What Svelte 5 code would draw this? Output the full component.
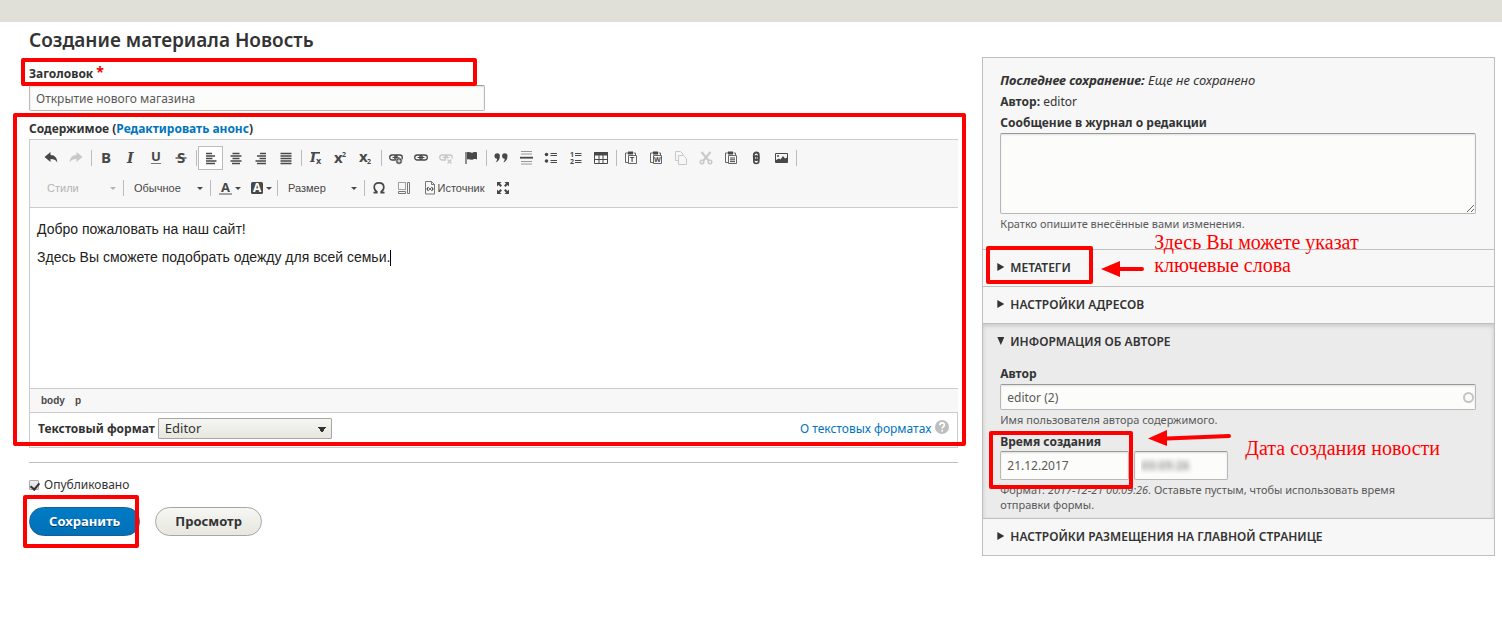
<script>
    let title = "Открытие нового магазина";
    let published = true;
    let log = "";
    let author = "editor (2)";
    let date = "21.12.2017";
    let time = "00:09:26";

    const page = '<path d="M6 3H2.500v9.500H5M10.500 3h2v2" fill="none" stroke="#666"/><path d="M5 1.500h5v3H5z" fill="#484848"/><path d="M5.500 5.500h8v8h-8z" fill="#f8f8f8" stroke="#666"/>';
    const chain = '<g fill="none" stroke="currentColor" stroke-width="1.300"><rect x="1.700" y="5" width="7.500" height="5" rx="2.500"/><rect x="6.800" y="5" width="7.500" height="5" rx="2.500"/></g><path d="M4.500 7.500h7" stroke="currentColor"/>';

    const groups = [
        [
            { name: "Отменить", icon: '<path d="M1.500 7 7.500 2v3c4.500.2 6.800 3 6.700 7.500C12.800 9.700 11 9 7.500 9v3z" fill="currentColor"/>' },
            { name: "Повторить", off: true, icon: '<path d="M14.500 7 8.500 2v3C4 5.200 1.700 8 1.800 12.500 3.200 9.700 5 9 8.500 9v3z" fill="currentColor"/>' }
        ],
        [
            { name: "Полужирный", icon: '<text x="3" y="13" font-size="15" font-weight="700">B</text>' },
            { name: "Курсив", icon: '<text x="4" y="13" font-size="14" font-weight="700" font-style="italic" font-family="DejaVu Serif">I</text>' },
            { name: "Подчеркнутый", icon: '<text x="3" y="11" font-size="13" font-weight="700">U</text><path d="M3 13.500h10" stroke="#777"/>' },
            { name: "Зачеркнутый", icon: '<text x="4" y="13" font-size="15" font-weight="700">S</text><path d="M2.500 8h11" stroke="currentColor" stroke-width="1.300"/>' }
        ],
        [
            { name: "По левому краю", on: true, icon: '<path d="M3 3.500h6M3 6h9M3 8.500h6.500M3 11h10.500M3 13.500h9" stroke="currentColor" stroke-width="1.400"/>' },
            { name: "По центру", icon: '<path d="M4.500 3.500h7M2.500 6h11M4.500 8.500h7M2.500 11h11M4 13.500h8" stroke="currentColor" stroke-width="1.400"/>' },
            { name: "По правому краю", icon: '<path d="M7 3.500h6M4 6h9M6.500 8.500H13M2.500 11H13M4 13.500h9" stroke="currentColor" stroke-width="1.400"/>' },
            { name: "По ширине", icon: '<path d="M2.500 3.500h11M2.500 6h11M2.500 8.500h11M2.500 11h11M2.500 13.500h11" stroke="currentColor" stroke-width="1.400"/>' }
        ],
        [
            { name: "Убрать форматирование", icon: '<text x="2" y="12" font-size="13" font-weight="700" font-style="italic" font-family="DejaVu Serif">I</text><path d="M3 2.800h9" stroke="currentColor" stroke-width="1.600"/><text x="8" y="14" font-size="9" font-weight="700">x</text>' },
            { name: "Надстрочный индекс", icon: '<text x="1" y="13" font-size="15" font-weight="700">x</text><text x="9" y="7" font-size="7" font-weight="700">2</text>' },
            { name: "Подстрочный индекс", icon: '<text x="1" y="12" font-size="15" font-weight="700">x</text><text x="9" y="14" font-size="7" font-weight="700">2</text>' }
        ],
        [
            { name: "Вставить ссылку", icon: chain + '<circle cx="11" cy="11" r="3.200" fill="#484848" stroke="#f8f8f8" stroke-width=".5"/><path d="M11 9.300v3.400M9.300 11h3.400" stroke="#fff"/>' },
            { name: "Ссылка", icon: chain },
            { name: "Убрать ссылку", off: true, icon: chain + '<path d="M8 8.500h7v6H8z" fill="#f8f8f8"/><path d="m9.500 9.500 4 4m0-4-4 4" stroke="currentColor" stroke-width="1.400"/>' },
            { name: "Якорь", icon: '<path d="M3 2v12" stroke="currentColor" stroke-width="1.200"/><path d="M4 2.500c2-1.300 4 1 6 0 1.300-.6 2.500-.6 4 0v7c-1.500-.6-3-.5-4 0-2 1-4-1-6 0z" fill="currentColor"/>' }
        ],
        [
            { name: "Цитата", icon: '<path d="M1.500 6a2.700 2.700 0 0 1 5.400 0c0 3-1.300 5.700-4.400 6.500 1-1.200 1.600-2.300 1.600-3.800A2.700 2.700 0 0 1 1.500 6zm7.600 0a2.700 2.700 0 0 1 5.400 0c0 3-1.300 5.700-4.400 6.500 1-1.200 1.600-2.300 1.600-3.800A2.700 2.700 0 0 1 9.100 6z" fill="currentColor"/>' },
            { name: "Горизонтальная линия", icon: '<path d="M3 1.500h11M3 4h11M3 11.500h11M3 14h11" stroke="#999"/><path d="M2 7.700h13" stroke="currentColor" stroke-width="1.800"/>' },
            { name: "Маркированный список", icon: '<circle cx="3.500" cy="4.500" r="1.800" fill="currentColor"/><circle cx="3.500" cy="11" r="1.800" fill="currentColor"/><path d="M7.500 3.500H14M7.500 5.500H14M7.500 10.500H14M7.500 12.500H14" stroke="currentColor"/>' },
            { name: "Нумерованный список", icon: '<text x="2" y="7" font-size="7" font-weight="700">1</text><text x="2" y="14" font-size="7" font-weight="700">2</text><path d="M7 3.500h6.500M7 5.500h6.500M7 10.500h6.500M7 12.500h6.500" stroke="currentColor"/>' },
            { name: "Таблица", icon: '<path d="M1.500 2.500h13v11h-13zM1.500 9.500h13M6 4v9.500M10 4v9.500" fill="none" stroke="currentColor"/><path d="M1 2h14v3.500H1z" fill="currentColor"/>' }
        ],
        [
            { name: "Вставить только текст", icon: page + '<text x="7" y="12" font-size="7" font-weight="700">T</text>' },
            { name: "Вставить из Word", icon: page + '<text x="6" y="12" font-size="7" font-weight="700">W</text>' },
            { name: "Копировать", off: true, icon: '<path d="M5.500 10.500h-3v-9h5l2.500 2.500v1M5.500 5.500h5l3 3v6h-8z" fill="none" stroke="currentColor"/>' },
            { name: "Вырезать", off: true, icon: '<path d="m3.500 2 7.500 9M12.500 2 5 11" stroke="currentColor" stroke-width="2"/><g fill="none" stroke="currentColor" stroke-width="1.400"><circle cx="4" cy="12" r="1.800"/><circle cx="12" cy="12" r="1.800"/></g>' },
            { name: "Вставить", icon: page + '<path d="M7 8h5M7 9.800h5M7 11.600h5" stroke="currentColor"/>' },
            { name: "Файл", icon: '<rect x="5.800" y="2.500" width="5" height="7.500" rx="2.500" fill="none" stroke="currentColor" stroke-width="1.800"/><rect x="5.800" y="6" width="5" height="7.500" rx="2.500" fill="none" stroke="currentColor" stroke-width="1.600"/><path d="M8.300 5v6" stroke="currentColor"/>' },
            { name: "Изображение", icon: '<path d="M2.500 3.500h12v9h-12z" fill="none" stroke="currentColor"/><path d="M3 12.500V10l3-1.500 1.500 1L10 6l2 2.500 2-1v5z" fill="currentColor"/><circle cx="5" cy="6" r="1" fill="currentColor"/>' }
        ]
    ];

    const tools = [
        { name: "Специальный символ", icon: '<path d="M2.500 12.700h3.300v-1C4 10.600 3.200 9 3.200 7.200 3.200 4.500 5 2.800 8 2.800s4.800 1.700 4.800 4.400c0 1.800-.8 3.400-2.600 4.500v1h3.300" fill="none" stroke="currentColor" stroke-width="1.700"/>' },
        { name: "Показать блоки", icon: '<path d="M2.500 2.500h7v7h-7z" fill="none" stroke="currentColor" stroke-dasharray="1 1"/><path d="M2.500 11.500h7v2h-7zM11.500 2.500h2v11h-2z" fill="none" stroke="#777"/>' },
        { name: "Источник", text: "Источник", icon: '<path d="M3.500 1.500h6l3 3v9.500h-9zM9.500 1.500v3h3" fill="none" stroke="#777"/><path d="M6.500 7 5 9l1.500 2M9.500 7 11 9l-1.500 2" fill="none" stroke="currentColor" stroke-width="1.200"/><circle cx="8" cy="9" r="1" fill="currentColor"/>' },
        { name: "Развернуть", icon: '<path d="M2 2h4.500L5 3.500 7 5.500 5.500 7l-2-2L2 6.500zM14 2v4.500L12.500 5l-2 2L9 5.500l2-2L9.500 2zM2 14V9.500L3.500 11l2-2L7 10.500l-2 2L6.500 14zM14 14H9.500l1.500-1.500-2-2L10.500 9l2 2L14 9.500z" fill="currentColor"/>' }
    ];

    const colors = [
        { name: "Цвет текста", icon: '<text x="3" y="12" font-size="13" font-weight="700">A</text><path d="M1 14h13" stroke="#888" stroke-width="1.500"/>' },
        { name: "Цвет фона", icon: '<rect x="2" y="2" width="12" height="12" rx="1.500" fill="currentColor"/><text x="4" y="12" font-size="12" font-weight="700" style="fill:#fff">A</text>' }
    ];
</script>

{#snippet tool(item)}
    <button type="button" class="tool" class:on={item.on} class:off={item.off} title={item.name} aria-label={item.name}>
        <svg viewBox="0 0 16 16">{@html item.icon}</svg>
        {#if item.text}<span>{item.text}</span>{/if}
    </button>
{/snippet}

{#snippet combo(name, off)}
    <button type="button" class="combo" class:off>
        <span>{name}</span><i class="caret"></i>
    </button>
{/snippet}

<header class="topbar"></header>

<div class="page">
    <form class="main">
        <h1>Создание материала Новость</h1>

        <div class="title-label">
            <label for="title">Заголовок</label><span class="required">*</span>
            <div class="mark title-mark"></div>
        </div>
        <input id="title" class="field title" type="text" bind:value={title} />

        <section class="body-field">
            <div class="body-label">Содержимое (<a href="#summary">Редактировать анонс</a>)</div>
            <div class="editor">
                <div class="toolbar">
                    <div class="row">
                        {#each groups as group}
                            <div class="group">
                                {#each group as item}{@render tool(item)}{/each}
                            </div>
                        {/each}
                    </div>
                    <div class="row">
                        <div class="group">{@render combo("Стили", true)}</div>
                        <div class="group">{@render combo("Обычное", false)}</div>
                        <div class="group">
                            {#each colors as item}
                                <button type="button" class="tool color" aria-label={item.name}>
                                    <svg viewBox="0 0 16 16">{@html item.icon}</svg><i class="caret"></i>
                                </button>
                            {/each}
                        </div>
                        <div class="group">{@render combo("Размер", false)}</div>
                        <div class="group last">
                            {#each tools as item}{@render tool(item)}{/each}
                        </div>
                    </div>
                </div>
                <div class="content" contenteditable="true" role="textbox" tabindex="0" aria-label="Содержимое">
                    <p>Добро пожаловать на наш сайт!</p>
                    <p>Здесь Вы сможете подобрать одежду для всей семьи.<span class="cursor"></span></p>
                </div>
                <div class="path"><span>body</span><span>p</span></div>
            </div>
            <div class="format">
                <label for="format">Текстовый формат</label>
                <select id="format">
                    <option>Editor</option>
                </select>
                <a href="#formats">О текстовых форматах
                    <svg viewBox="0 0 14 14"><circle cx="7" cy="7" r="7" fill="#bebebe" /><path d="M4.800 5.300c0-3.200 4.600-3 4.600-.3C9.400 6.700 7.200 6.700 7.200 8.500M7.200 9.800v1.700" fill="none" stroke="#fff" stroke-width="1.700" /></svg>
                </a>
            </div>
            <div class="mark body-mark"></div>
        </section>

        <div class="actions">
            <label class="published"><input type="checkbox" bind:checked={published} /><span>Опубликовано</span></label>
            <div class="buttons">
                <div class="save">
                    <button type="button" class="button primary">Сохранить</button>
                    <div class="mark save-mark"></div>
                </div>
                <button type="button" class="button">Просмотр</button>
            </div>
        </div>
    </form>

    <aside class="sidebar">
        <section class="meta">
            <p><em><b>Последнее сохранение:</b> Еще не сохранено</em></p>
            <p><b>Автор:</b> editor</p>
            <label for="log">Сообщение в журнал о редакции</label>
            <textarea id="log" class="field" bind:value={log}></textarea>
            <p class="hint">Кратко опишите внесённые вами изменения.</p>
        </section>

        <details>
            <summary>Метатеги</summary>
        </details>
        <div class="note meta-note">
            <div class="mark meta-mark"></div>
            <svg class="arrow" viewBox="0 0 44 18"><path d="M19 9h22" stroke="red" stroke-width="4" stroke-linecap="round" /><path d="M0 9 19 1v16z" fill="red" /></svg>
            <p>Здесь Вы можете указат<br />ключевые слова</p>
        </div>
        <details>
            <summary>Настройки адресов</summary>
        </details>
        <details class="opened" open>
            <summary>Информация об авторе</summary>
            <div class="inner">
                <label for="author">Автор</label>
                <div class="lookup">
                    <input id="author" class="field" type="text" bind:value={author} />
                    <i class="throbber"></i>
                </div>
                <p class="hint">Имя пользователя автора содержимого.</p>
                <div class="created">
                    <label for="date">Время создания</label>
                    <div class="times">
                        <input id="date" class="field" type="text" bind:value={date} />
                        <input class="field hidden-time" type="text" aria-label="Время" bind:value={time} />
                    </div>
                    <div class="mark date-mark"></div>
                    <div class="note date-note">
                        <svg class="arrow long" viewBox="0 0 84 18"><path d="M19 9.500 81 7" stroke="red" stroke-width="4" stroke-linecap="round" /><path d="M0 9.500 19 1v16z" fill="red" /></svg>
                        <p>Дата создания новости</p>
                    </div>
                </div>
                <p class="hint">Формат: <em>2017-12-21 00:09:26</em>. Оставьте пустым, чтобы использовать время отправки&nbsp;формы.</p>
            </div>
        </details>
        <details>
            <summary>Настройки размещения на главной странице</summary>
        </details>
    </aside>
</div>

<style>
    :global(body) {
        background: #fff;
        color: #333;
        font: 13px/21px "Noto Sans", "Open Sans", sans-serif;
    }

    :global(*) {
        box-sizing: border-box;
    }

    .topbar {
        height: 22px;
        background: #e0e0d8;
    }

    .page {
        display: grid;
        grid-template-columns: 29fr 16fr;
        column-gap: 24px;
        align-items: start;
        padding: 0 7px 0 29px;
    }

    p,
    h1 {
        margin: 0;
    }

    a {
        color: #0074bd;
        text-decoration: none;
    }

    label,
    .body-label {
        font-weight: 700;
        font-size: 12px;
    }

    h1 {
        padding-top: 4px;
        font-size: 19px;
        line-height: 28px;
        font-weight: 600;
    }

    /* red frames and notes that lie over the form */
    .mark {
        position: absolute;
        border: 4px solid #f00;
        border-radius: 2px;
        pointer-events: none;
        z-index: 2;
    }

    .field {
        display: block;
        width: 100%;
        height: 26px;
        margin: 0;
        padding: 0 6px;
        border: 1px solid #b8b8b8;
        border-top-color: #999;
        border-radius: 2px;
        background: #fcfcfa;
        box-shadow: inset 0 1px 2px rgba(0, 0, 0, 0.12);
        color: #595959;
        font: 12px "Noto Sans", sans-serif;
        outline: none;
    }

    .title-label {
        position: relative;
        display: flex;
        gap: 3px;
        padding-top: 9px;
        height: 31px;
    }

    .required {
        color: #e00;
        font-size: 14px;
        font-weight: 700;
        line-height: 18px;
    }

    .title-mark {
        top: 4px;
        left: -8px;
        width: 456px;
        height: 28px;
    }

    .title {
        width: 456px;
        max-width: 100%;
    }

    .body-field {
        position: relative;
        padding-top: 8px;
    }

    .body-label {
        line-height: 20px;
    }

    .body-mark {
        inset: 2px -8px 2px -16px;
    }

    .editor {
        border: 1px solid #ccc;
        border-right: 0;
    }

    .toolbar {
        display: flex;
        flex-direction: column;
        gap: 6px;
        padding: 6px 8px 7px;
        background: #f7f7f7;
        border-bottom: 1px solid #ccc;
    }

    .row,
    .group {
        display: flex;
        align-items: center;
    }

    .group::after {
        content: "";
        width: 1px;
        height: 16px;
        margin: 0 1px 0 3px;
        background: #bcbcbc;
    }

    .group.last::after {
        display: none;
    }

    button {
        cursor: pointer;
    }

    .tool,
    .combo {
        display: flex;
        align-items: center;
        justify-content: center;
        width: 25px;
        height: 24px;
        padding: 0;
        border: 0;
        background: none;
        color: #484848;
        font: 11px "Liberation Sans", Arial, sans-serif;
    }

    .tool:has(span) {
        width: 74px;
    }

    .tool svg {
        width: 16px;
        height: 16px;
        flex: none;
        overflow: visible;
        fill: #484848;
        font-family: "Open Sans", sans-serif;
    }

    .tool.on {
        border: 1px solid #bcbcbc;
        background: #fff;
    }

    .tool.off {
        color: #c8c8c8;
    }

    .tool.color {
        width: 31px;
        gap: 1px;
        padding-left: 3px;
    }

    .combo {
        width: 82px;
        justify-content: space-between;
        padding: 0 4px 0 9px;
    }

    .combo.off {
        color: #b4b4b4;
    }

    .caret {
        border: 3px solid transparent;
        border-top-color: currentColor;
        border-bottom: 0;
    }

    .content {
        height: 180px;
        padding: 12px 7px;
        outline: none;
        background: #fff;
        color: #222;
        font: 14px/18px "Liberation Sans", Arial, sans-serif;
    }

    .content p + p {
        margin-top: 10px;
    }

    .cursor {
        display: inline-block;
        width: 1px;
        height: 16px;
        background: #000;
        vertical-align: middle;
    }

    .path {
        display: flex;
        gap: 10px;
        padding: 0 11px;
        border-top: 1px solid #ccc;
        background: #f7f7f7;
        color: #484848;
        font: 700 10px/23px "Liberation Sans", Arial, sans-serif;
    }

    .format {
        display: flex;
        align-items: center;
        gap: 3px;
        height: 35px;
        padding: 0 8px 4px;
        border: 1px solid #ccc;
        border-top: 0;
    }

    .format a {
        display: flex;
        gap: 4px;
        margin-left: auto;
        font-size: 12px;
    }

    .format a svg {
        width: 14px;
        height: 14px;
        margin-top: 2px;
    }

    select {
        appearance: none;
        width: 174px;
        height: 21px;
        padding: 0 6px;
        border: 1px solid #a6a6a6;
        border-radius: 1px;
        background:
            linear-gradient(to bottom left, #333 50%, transparent 50%) right 9px top 8px / 4px 6px no-repeat,
            linear-gradient(to bottom right, #333 50%, transparent 50%) right 5px top 8px / 4px 6px no-repeat,
            linear-gradient(#f6f6f3, #e7e7df);
        color: #333;
        font: 13px/17px "Noto Sans", sans-serif;
    }

    .actions {
        margin-top: 14px;
        padding-top: 11px;
        border-top: 1px solid #bebebe;
    }

    .published {
        display: flex;
        align-items: center;
        gap: 5px;
        font-weight: 400;
    }

    .published input {
        appearance: none;
        width: 10px;
        height: 10px;
        margin: 0;
        border: 1px solid #aaa;
        border-radius: 1px;
        background: linear-gradient(#eee, #ddd);
    }

    .published input:checked::before {
        content: "";
        display: block;
        width: 4px;
        height: 7px;
        margin: 0 0 0 2px;
        border: solid #333;
        border-width: 0 2px 2px 0;
        transform: rotate(40deg);
    }

    .buttons {
        display: flex;
        gap: 15px;
        padding-top: 12px;
    }

    .save {
        position: relative;
    }

    .save-mark {
        inset: -12px 1px -12px -6px;
    }

    .button {
        display: block;
        height: 29px;
        padding: 0 19px 2px;
        border: 1px solid #a6a6a6;
        border-radius: 15px;
        background: linear-gradient(#f6f6f3, #e7e7df);
        color: #333;
        font: 700 13px "Noto Sans", sans-serif;
    }

    .primary {
        border-color: #1e5c90;
        background: linear-gradient(#007bc6, #0071b8);
        color: #fff;
        text-shadow: 0 1px rgba(0, 0, 0, 0.5);
    }

    .sidebar {
        margin-top: 35px;
        border: 1px solid #bfbfbf;
        background: #f7f7f7;
    }

    .meta {
        padding: 12px 18px 18px 17px;
        font-size: 12px;
    }

    .meta em {
        font-size: 13px;
    }

    .meta label {
        display: block;
    }

    textarea.field {
        height: 81px;
        resize: both;
    }

    p.hint {
        color: #595959;
        font-size: 11px;
        line-height: 15px;
        padding-top: 2px;
    }

    details {
        border-top: 1px solid #bfbfbf;
    }

    summary {
        display: flex;
        align-items: center;
        gap: 6px;
        height: 36px;
        padding: 0 14px 2px;
        font-size: 12px;
        font-weight: 600;
        text-transform: uppercase;
        cursor: pointer;
    }

    summary::before {
        content: "";
        width: 7px;
        height: 8px;
        background: #333;
        clip-path: polygon(0 0, 100% 50%, 0 100%);
    }

    .opened {
        background: #ebebeb;
        box-shadow: inset 0 2px 4px rgba(0, 0, 0, 0.15);
    }

    .opened summary::before {
        clip-path: polygon(0 0, 100% 0, 50% 100%);
    }

    .inner {
        padding: 4px 18px 6px 17px;
    }

    .inner label {
        display: block;
        line-height: 20px;
    }

    .lookup,
    .created {
        position: relative;
    }

    .throbber {
        position: absolute;
        top: 8px;
        right: 2px;
        width: 11px;
        height: 11px;
        border: 2px solid #c4c4c4;
        border-radius: 50%;
    }

    .times {
        display: flex;
        gap: 5px;
    }

    .created {
        padding-top: 6px;
    }

    .created label {
        line-height: 18px;
    }

    .times .field {
        width: 129px;
        height: 29px;
    }

    .times .hidden-time {
        width: 94px;
        color: transparent;
        text-shadow: 0 0 5px #999;
        font-weight: 700;
    }

    .note {
        position: relative;
        height: 0;
        color: #f00;
        font: 20px/23px "Liberation Serif", "Times New Roman", serif;
        z-index: 3;
    }

    .note p,
    .arrow {
        position: absolute;
    }

    .arrow {
        width: 44px;
        height: 18px;
    }

    .meta-mark {
        top: -40px;
        left: 3px;
        width: 107px;
        height: 38px;
    }

    .meta-note .arrow {
        top: -26px;
        left: 118px;
    }

    .meta-note p {
        top: -55px;
        left: 171px;
    }

    .date-mark {
        top: 4px;
        left: -11px;
        width: 144px;
        height: 58px;
    }

    .date-note {
        position: absolute;
        top: 2px;
        left: 148px;
    }

    .arrow.long {
        width: 84px;
    }

    .date-note p {
        top: 8px;
        left: 97px;
        white-space: nowrap;
    }
</style>
